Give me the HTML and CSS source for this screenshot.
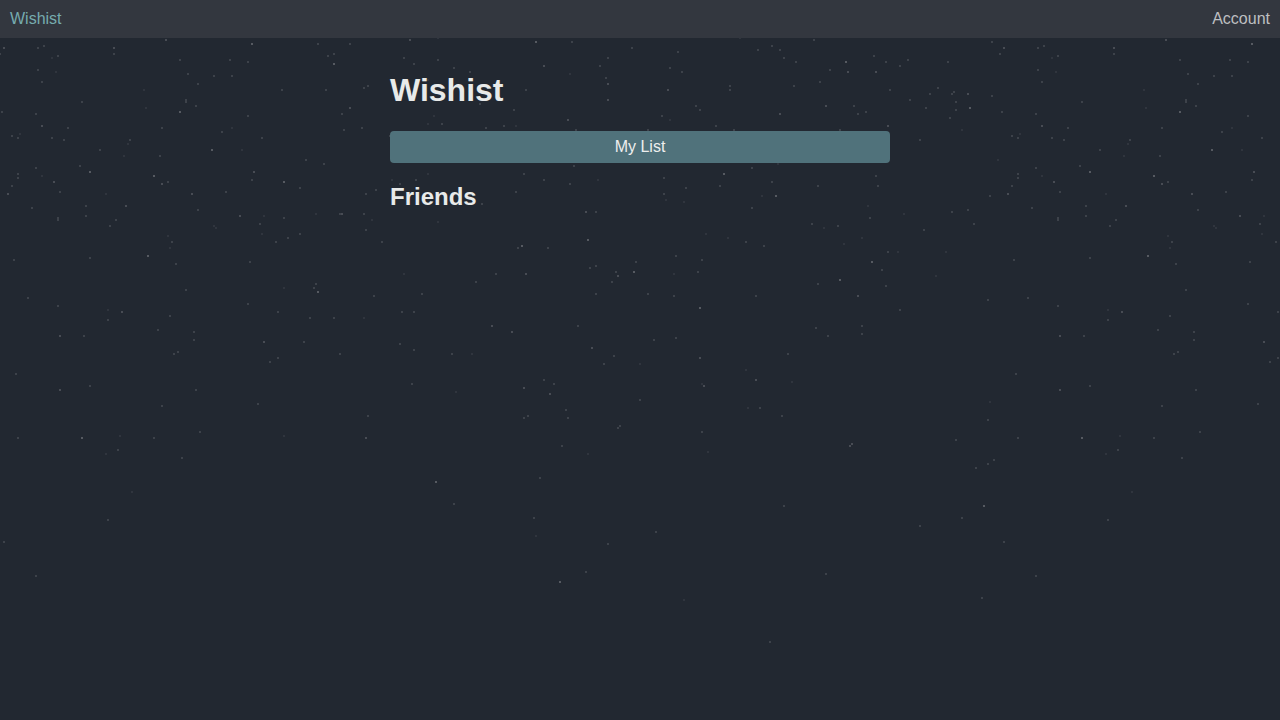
FILE: index.html
```html
<!DOCTYPE html>
<html lang="en">
<head>
<meta charset="utf-8">
<meta name="viewport" content="width=device-width, initial-scale=1">
<title>Wishist</title>
<link rel="stylesheet" href="styles.css">
</head>
<body>
<svg class="stars" aria-hidden="true">
  <defs>
    <pattern id="sky" width="1000" height="1000" patternUnits="userSpaceOnUse">
      <path class="star star-bright" d="M252 44h0M180 112h0M212 150h0M90 172h0M154 176h0M334 64h0M284 182h0M536 42h0M724 174h0M588 240h0M522 246h0M846 62h0M970 108h0M776 196h0M872 262h0M148 256h0M82 438h0M318 292h0M634 272h0M700 308h0M840 280h0M436 482h0M560 582h0M984 506h0"/>
      <path class="star star-medium" d="M192 194h0M254 172h0M186 101h0M58 219h0M350 108h0M544 66h0M608 84h0M608 100h0M888 126h0M668 90h0M968 94h0M618 276h0M526 274h0M858 296h0M492 326h0M512 332h0M264 342h0M592 348h0M700 358h0M524 388h0M550 394h0M704 386h0M756 380h0M60 336h0M60 390h0M122 312h0M852 444h0M850 446h0M4 48h0M114 48h0M166 40h0M42 126h0M54 182h0M162 184h0M8 194h0M126 206h0M240 216h0M410 40h0M366 438h0M826 106h0M848 72h0M876 72h0M780 114h0M568 120h0M586 212h0M342 214h0"/>
      <path class="star" d="M44 46h0M38 48h0M58 56h0M0 54h0M1000 54h0M114 54h0M180 60h0M230 60h0M248 62h0M38 70h0M42 82h0M188 74h0M214 76h0M232 76h0M198 84h0M82 102h0M186 100h0M186 102h0M196 106h0M2 112h0M36 114h0M68 128h0M248 116h0M162 128h0M222 132h0M12 136h0M18 138h0M52 138h0M64 140h0M130 140h0M262 138h0M100 150h0M160 156h0M80 166h0M252 180h0M36 168h0M18 174h0M18 178h0M12 186h0M60 192h0M168 182h0M226 192h0M198 210h0M32 208h0M86 206h0M86 216h0M116 220h0M110 226h0M58 218h0M58 220h0M260 224h0
      M318 44h0M350 44h0M328 56h0M334 54h0M404 58h0M414 64h0M438 60h0M454 68h0M470 72h0M282 90h0M326 90h0M364 88h0M368 86h0M342 114h0M480 104h0M442 124h0M362 128h0M344 130h0M486 128h0M504 126h0M390 136h0M306 160h0M324 164h0M300 188h0M376 190h0M366 194h0M400 184h0M416 180h0M482 204h0M284 218h0M340 214h0M364 214h0M366 230h0M382 242h0M300 234h0M288 238h0M276 242h0M250 262h0
      M572 42h0M632 48h0M678 52h0M758 50h0M608 58h0M600 66h0M606 78h0M526 90h0M670 68h0M682 72h0M730 86h0M730 90h0M514 110h0M696 106h0M700 110h0M662 116h0M576 130h0M648 130h0M716 126h0M734 130h0M574 166h0M752 168h0M524 174h0M544 180h0M570 184h0M720 186h0M664 178h0M664 194h0M686 188h0M516 192h0M596 212h0M752 208h0M746 242h0M518 248h0M548 248h0M676 256h0M702 260h0M636 262h0M596 266h0M590 268h0M764 246h0
      M814 40h0M772 46h0M780 50h0M784 58h0M796 62h0M874 56h0M886 62h0M908 60h0M900 66h0M948 62h0M992 42h0M830 70h0M820 82h0M794 86h0M890 90h0M938 88h0M930 94h0M954 92h0M952 94h0M956 102h0M956 110h0M926 108h0M910 100h0M950 118h0M992 96h0M854 106h0M866 112h0M858 114h0M840 130h0M920 140h0M772 182h0M818 186h0M876 176h0M878 186h0M990 196h0M870 218h0M952 212h0M968 210h0M974 224h0M924 230h0M812 224h0M838 226h0M888 252h0M882 270h0
      M14 260h0M90 258h0M172 242h0M176 264h0M28 298h0M58 306h0M186 290h0M108 320h0M170 316h0M158 330h0M194 332h0M194 340h0M178 352h0M174 354h0M84 336h0M248 304h0M16 374h0M90 386h0M196 390h0M162 406h0M258 404h0M18 438h0M154 438h0M118 450h0M200 432h0M182 458h0
      M476 282h0M496 274h0M316 284h0M314 288h0M374 296h0M422 294h0M278 312h0M402 312h0M414 312h0M310 318h0M334 318h0M304 342h0M400 344h0M414 350h0M340 354h0M278 358h0M270 362h0M452 354h0M412 384h0M368 416h0
      M616 272h0M612 282h0M596 294h0M648 294h0M674 296h0M698 272h0M756 296h0M578 326h0M676 338h0M654 340h0M614 356h0M604 364h0M544 380h0M554 384h0M640 400h0M566 410h0M568 418h0M528 416h0M524 418h0M620 426h0M618 428h0M702 432h0M562 446h0M760 408h0
      M818 284h0M886 286h0M900 310h0M988 300h0M862 326h0M862 334h0M816 328h0M828 336h0M788 354h0M782 416h0M988 420h0M956 440h0M994 460h0M988 464h0M976 468h0
      M540 478h0M454 504h0M534 518h0M608 544h0M656 532h0M586 572h0M770 642h0M784 506h0M826 574h0M982 598h0M920 526h0M962 518h0M108 520h0M4 542h0M36 576h0"/>
      <path class="star star-dim" d="M52 58h0M56 72h0M144 90h0M146 108h0M232 128h0M20 134h0M128 144h0M124 156h0M242 150h0M42 176h0M106 194h0M214 226h0M216 228h0M168 236h0M170 248h0M438 38h0M428 80h0M434 116h0M428 124h0M392 180h0M428 174h0M264 216h0M262 234h0M316 214h0M372 220h0M438 222h0M740 38h0M570 74h0M670 120h0M516 126h0M598 180h0M666 200h0M684 202h0M706 234h0M728 238h0M962 130h0M998 160h0M778 164h0M762 196h0M868 206h0M904 214h0M824 228h0M862 238h0M844 244h0M898 252h0M946 252h0M108 310h0M120 436h0M106 454h0M404 274h0M284 288h0M364 318h0M472 354h0M456 392h0M284 436h0M674 274h0M640 364h0M746 370h0M702 384h0M588 454h0M748 408h0M708 452h0M936 276h0M792 382h0M990 402h0M536 536h0M684 600h0M132 492h0"/>
    </pattern>
  </defs>
  <rect width="100%" height="100%" fill="url(#sky)"/>
</svg>
<header class="topbar">
  <a class="brand" href="#">Wishist</a>
  <a class="account" href="#">Account</a>
</header>
<main class="content">
  <h1 class="title">Wishist</h1>
  <a class="list-link" href="#">My List</a>
  <h2 class="subtitle">Friends</h2>
</main>
</body>
</html>
```
FILE: styles.css
```css
* {
  box-sizing: border-box;
}

body {
  margin: 0;
  min-height: 100vh;
  background: #222831;
  color: #e8eae9;
  font-family: "Liberation Sans", Arial, sans-serif;
  font-size: 16px;
  line-height: 18px;
}

.stars {
  position: absolute;
  inset: 0;
  z-index: -1;
  width: 100%;
  height: 100%;
}

.star {
  fill: none;
  stroke: #3d424a;
  stroke-width: 2;
  stroke-linecap: square;
}

.star-medium {
  stroke: #484c54;
}

.star-bright {
  stroke: #565a61;
}

.star-dim {
  stroke: #30353e;
}

.topbar {
  display: flex;
  justify-content: space-between;
  padding: 10px;
  background: #33373f;
}

.brand,
.account {
  text-decoration: none;
}

.brand {
  color: #76abae;
}

.account {
  color: #bdbfc1;
}

.content {
  max-width: 520px;
  margin: 0 auto;
  padding: 34px 10px;
}

.title {
  margin: 0 0 23px;
  font-size: 32px;
  line-height: 36px;
}

.list-link {
  display: block;
  padding: 7px;
  border-radius: 4px;
  background: #50727b;
  color: #eeeeee;
  text-align: center;
  text-decoration: none;
}

.subtitle {
  margin: 20px 0;
  font-size: 24px;
  line-height: 28px;
}
```
